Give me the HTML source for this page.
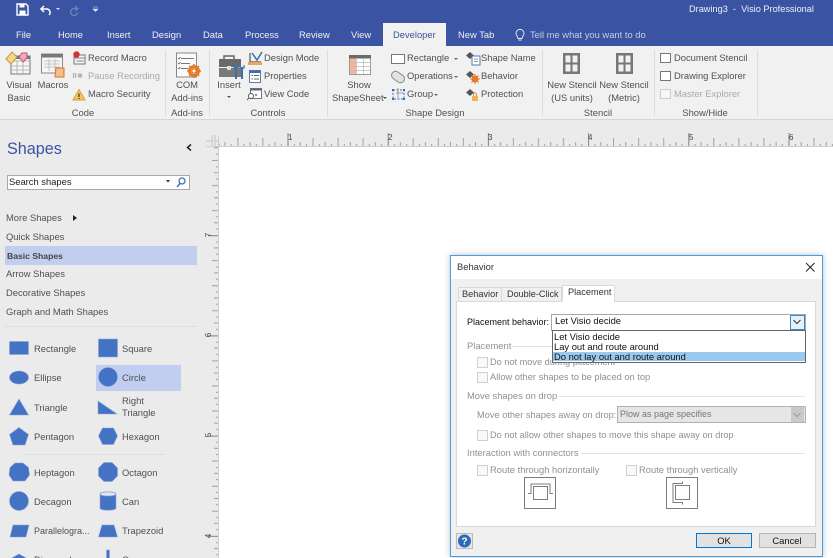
<!DOCTYPE html>
<html><head><meta charset="utf-8"><style>
html,body{margin:0;padding:0;width:833px;height:558px;overflow:hidden;background:#ebebeb}
#r{position:relative;width:833px;height:558px;overflow:hidden;font-family:"Liberation Sans",sans-serif;font-size:9.4px;color:#444;filter:blur(.35px)}
.t{position:absolute;line-height:12px;height:12px;white-space:nowrap}
.c{transform:translateX(-50%)}
.b{position:absolute}
.w{color:#eef1f8}
.g{color:#505050}
.s{color:#505050}
.d{color:#111}
.x{color:#909090}
.cb{position:absolute;width:9px;height:9px;border:1px solid #d0d0d0;background:#f9f9f9}
svg{position:absolute;overflow:visible}
</style></head><body><div id="r">

<!-- Title bar and tabs -->
<div class="b" style="left:0;top:0;width:833px;height:46px;background:#3a53a3"></div>
<svg style="left:0;top:0" width="120" height="20">
<path d="M17 4h9l2 2v9H17z" fill="none" stroke="#fff" stroke-width="1.4"/><rect x="19.500" y="4.500" width="5" height="3" fill="#fff"/><rect x="19.500" y="10.500" width="6" height="4" fill="#fff"/>
<path d="M44 6l-3 3 3 3M41 9h6a3.500 3.500 0 0 1 2 6" fill="none" stroke="#fff" stroke-width="1.500"/>
<path d="M56 8h4l-2 2z" fill="#dfe4f2"/>
<path d="M75 6l3 2.500-3 2.500M77 8.500h-3a3.500 3.500 0 1 0 3.500 4" fill="none" stroke="#6f83bd" stroke-width="1.300"/>
<path d="M93 7h5M93 9h5l-2.500 2.500z" fill="#dfe4f2" stroke="#dfe4f2" stroke-width=".6"/>
</svg>
<div class="t w" style="left:689px;top:3px;font-size:9.2px">Drawing3&nbsp; -&nbsp; Visio Professional</div>

<div class="t w" style="left:16px;top:29px">File</div>
<div class="t w" style="left:58px;top:29px">Home</div>
<div class="t w" style="left:107px;top:29px">Insert</div>
<div class="t w" style="left:152px;top:29px">Design</div>
<div class="t w" style="left:203px;top:29px">Data</div>
<div class="t w" style="left:245px;top:29px">Process</div>
<div class="t w" style="left:299px;top:29px">Review</div>
<div class="t w" style="left:351px;top:29px">View</div>
<div class="b" style="left:383px;top:23px;width:63px;height:24px;background:#f1f1f1"></div>
<div class="t" style="left:393px;top:29px;color:#3a53a3">Developer</div>
<div class="t w" style="left:458px;top:29px">New Tab</div>
<svg style="left:514px;top:28px" width="12" height="14"><path d="M3.500 8.500a4 4 0 1 1 5 0L8 10.500H4zM4.500 12h3" fill="none" stroke="#e8ecf6" stroke-width=".9"/></svg>
<div class="t" style="left:530px;top:29px;color:#c5cee6">Tell me what you want to do</div>

<!-- Ribbon -->
<div class="b" style="left:0;top:46px;width:833px;height:73px;background:#f1f1f1;border-bottom:1px solid #d6d6d6"></div>
<div class="b" style="left:165px;top:50px;width:1px;height:66px;background:#dcdcdc"></div>
<div class="b" style="left:209px;top:50px;width:1px;height:66px;background:#dcdcdc"></div>
<div class="b" style="left:327px;top:50px;width:1px;height:66px;background:#dcdcdc"></div>
<div class="b" style="left:542px;top:50px;width:1px;height:66px;background:#dcdcdc"></div>
<div class="b" style="left:654px;top:50px;width:1px;height:66px;background:#dcdcdc"></div>
<div class="b" style="left:757px;top:50px;width:1px;height:66px;background:#dcdcdc"></div>

<svg style="left:0;top:46px" width="760" height="60">
<!-- Visual Basic -->
<rect x="11" y="10" width="19" height="18" fill="#f6f6f6" stroke="#777"/><path d="M11 15h19M11 20h19M11 24h19M17 15v13M23 15v13" stroke="#a8a8a8" stroke-width=".8"/><rect x="11" y="10" width="19" height="3" fill="#777"/>
<path d="M12 6l5 5-6 7-5-5z" fill="#f3d88d" stroke="#c69a3a"/><path d="M22 7l5 0 0 5-4 4-4-5z" fill="#f2a8bb" stroke="#c5507a"/>
<!-- Macros -->
<rect x="41.500" y="8" width="21" height="19" fill="#f7f7f7" stroke="#888"/><rect x="41.500" y="8" width="21" height="3.500" fill="#777"/><path d="M44 15h16M44 18h16M44 21h16M49 13v12M55 13v12" stroke="#b5b5b5" stroke-width=".8"/>
<path d="M56 22h8v9h-9z" fill="#f2c08f" stroke="#d9762b"/>
<!-- Record etc -->
<rect x="74" y="9" width="11" height="9" fill="#f4f4f4" stroke="#777"/><path d="M74 12h11M76.500 15h7" stroke="#888"/><circle cx="76.500" cy="8.500" r="3.200" fill="#d0352a"/>
<path d="M73.500 27v5M75.500 27v5" stroke="#b5b5b5" stroke-width="1.300"/><circle cx="80" cy="29.500" r="2.300" fill="#b5b5b5"/>
<path d="M79 43.500l6 10.500H73z" fill="#f2c65e" stroke="#d4a440"/><path d="M79 47.500v3.500M79 52v1" stroke="#333" stroke-width="1.200"/>
<!-- COM -->
<rect x="176.500" y="7" width="20" height="24" fill="#fbfbfb" stroke="#888"/><path d="M181 12.500h13M181 17.500h9M181 22.500h7" stroke="#777" stroke-width=".9"/><path d="M178 12l1 1 1.500-2M178 17l1 1 1.500-2M178 22l1 1 1.500-2" fill="none" stroke="#5a5a5a" stroke-width=".7"/>
<circle cx="194" cy="25" r="4.500" fill="none" stroke="#e37b27" stroke-width="3"/><path d="M194 18v14M187 25h14M189 20l10 10M199 20l-10 10" stroke="#e37b27" stroke-width="1.500"/><circle cx="194" cy="25" r="1.500" fill="#fff"/>
<!-- Insert briefcase -->
<path d="M224 13v-3h10v3" fill="none" stroke="#666" stroke-width="1.500"/><rect x="219" y="13" width="22" height="8" fill="#696969"/><rect x="219" y="22" width="22" height="9" fill="#797979"/><rect x="227" y="20" width="4" height="4" fill="#ddd"/>
<path d="M236 21v12M242 21v12" stroke="#3a6fb0" stroke-width="2"/><path d="M234 19v3h4v-3M240 19v3h4v-3" fill="none" stroke="#3a6fb0" stroke-width="1.200"/>
<!-- Design mode -->
<path d="M250 7v9h11" fill="none" stroke="#555" stroke-width="1.200"/><path d="M252 7l5 7 5-8" fill="none" stroke="#3b6db5" stroke-width="1.500"/><rect x="248" y="16" width="14" height="3" fill="#e9a55a"/>
<!-- Properties -->
<rect x="249.500" y="24.500" width="11" height="12" fill="#fff" stroke="#5b7cb3"/><rect x="249.500" y="24.500" width="11" height="2.500" fill="#3b6db5"/><path d="M251.500 29.500h1.500M254 29.500h5M251.500 33h1.500M254 33h5" stroke="#666"/>
<!-- View code -->
<rect x="250.500" y="42.500" width="11" height="10" fill="#fff" stroke="#777"/><rect x="250.500" y="42.500" width="11" height="2" fill="#666"/><circle cx="251" cy="50" r="2.500" fill="#fff" stroke="#555"/><path d="M249 52l-2 2" stroke="#555"/><path d="M255 48l2 1-2 1" fill="none" stroke="#3b6db5" stroke-width=".7"/>
<!-- ShapeSheet -->
<rect x="349.500" y="9.500" width="21" height="19" fill="#fff" stroke="#999"/><rect x="349" y="9" width="22" height="3.500" fill="#6a6a6a"/><rect x="350" y="12.500" width="6" height="15.500" fill="#f5b79a"/><path d="M350 16.500h20M350 20.500h20M350 24.500h20M356.500 12v16M363.500 12v16" stroke="#bbb" stroke-width=".8"/>
<!-- Rectangle, operations, group -->
<rect x="391.500" y="8.500" width="13" height="9" fill="#fff" stroke="#777"/>
<g transform="rotate(35 398 31)"><rect x="391" y="27" width="14" height="8" rx="4" fill="#e2e2e2" stroke="#888"/></g>
<rect x="393" y="44" width="11" height="9" fill="none" stroke="#3b6db5" stroke-dasharray="2 1.500"/><path d="M398 42v10M396 47h8" stroke="#888" stroke-width=".8"/><path d="M392 43h2v2h-2zM403 43h2v2h-2zM392 52h2v2h-2zM403 52h2v2h-2z" fill="#3b6db5"/>
<path d="M454 12h4l-2 2zM454 30h4l-2 2zM434 48h4l-2 2z" fill="#666"/>
<!-- Shape name / behavior / protection -->
<path d="M470 6l4 3.500-4 3.500-4-3.500z" fill="#555"/><rect x="472" y="10" width="8" height="9" fill="#fff" stroke="#4f79b5"/><path d="M474 13h4M474 15.500h4" stroke="#777" stroke-width=".7"/>
<path d="M470 25l4 3.500-4 3.500-4-3.500z" fill="#555"/><circle cx="475" cy="33" r="2.500" fill="none" stroke="#e37b27" stroke-width="2"/><path d="M475 28v10M470 33h10M471.500 29.500l7 7M478.500 29.500l-7 7" stroke="#e37b27"/>
<path d="M470 43l4 3.500-4 3.500-4-3.500z" fill="#555"/><rect x="472" y="50" width="6" height="5" fill="#eab556"/><path d="M473.500 50v-1.500a1.500 1.500 0 0 1 3 0V50" fill="none" stroke="#c9922e"/>
<!-- stencils -->
<rect x="563" y="7" width="17" height="21" fill="#777"/><rect x="565.500" y="9.500" width="5" height="7" fill="#f1f1f1"/><rect x="572.500" y="9.500" width="5" height="7" fill="#f1f1f1"/><rect x="565.500" y="18.500" width="5" height="7" fill="#f1f1f1"/><rect x="572.500" y="18.500" width="5" height="7" fill="#f1f1f1"/>
<rect x="616" y="7" width="17" height="21" fill="#777"/><rect x="618.500" y="9.500" width="5" height="7" fill="#f1f1f1"/><rect x="625.500" y="9.500" width="5" height="7" fill="#f1f1f1"/><rect x="618.500" y="18.500" width="5" height="7" fill="#f1f1f1"/><rect x="625.500" y="18.500" width="5" height="7" fill="#f1f1f1"/>
<!-- check -->
<rect x="660.500" y="7.500" width="10" height="9" fill="#fff" stroke="#777"/><rect x="660.500" y="25.500" width="10" height="9" fill="#fff" stroke="#777"/><rect x="660.500" y="43.500" width="10" height="9" fill="#f6f6f6" stroke="#ccc"/>
</svg>

<div class="t g c" style="left:19px;top:79px">Visual</div>
<div class="t g c" style="left:19px;top:92px">Basic</div>
<div class="t g c" style="left:53px;top:79px">Macros</div>
<div class="t g" style="left:88px;top:52px">Record Macro</div>
<div class="t" style="left:88px;top:70px;color:#aaa">Pause Recording</div>
<div class="t g" style="left:88px;top:88px">Macro Security</div>
<div class="t s c" style="left:83px;top:107px">Code</div>
<div class="t g c" style="left:187px;top:79px">COM</div>
<div class="t g c" style="left:187px;top:92px">Add-ins</div>
<div class="t s c" style="left:187px;top:107px">Add-ins</div>
<div class="t g c" style="left:229px;top:79px">Insert</div>
<div class="b" style="left:227px;top:96px;width:0;height:0;border:2px solid transparent;border-top:2.500px solid #555"></div>
<div class="t g" style="left:264px;top:52px">Design Mode</div>
<div class="t g" style="left:264px;top:70px">Properties</div>
<div class="t g" style="left:264px;top:88px">View Code</div>
<div class="t s c" style="left:268px;top:107px">Controls</div>
<div class="t g c" style="left:359px;top:79px">Show</div>
<div class="t g" style="left:332px;top:92px">ShapeSheet</div>
<div class="b" style="left:383px;top:97px;width:0;height:0;border:2px solid transparent;border-top:2.500px solid #555"></div>
<div class="t g" style="left:407px;top:52px">Rectangle</div>
<div class="t g" style="left:407px;top:70px">Operations</div>
<div class="t g" style="left:407px;top:88px">Group</div>
<div class="t g" style="left:481px;top:52px">Shape Name</div>
<div class="t g" style="left:481px;top:70px">Behavior</div>
<div class="t g" style="left:481px;top:88px">Protection</div>
<div class="t s c" style="left:435px;top:107px">Shape Design</div>
<div class="t g c" style="left:572px;top:79px">New Stencil</div>
<div class="t g c" style="left:572px;top:92px">(US units)</div>
<div class="t g c" style="left:624px;top:79px">New Stencil</div>
<div class="t g c" style="left:624px;top:92px">(Metric)</div>
<div class="t s c" style="left:598px;top:107px">Stencil</div>
<div class="t g" style="left:674px;top:52px">Document Stencil</div>
<div class="t g" style="left:674px;top:70px">Drawing Explorer</div>
<div class="t" style="left:674px;top:88px;color:#aaa">Master Explorer</div>
<div class="t s c" style="left:705px;top:107px">Show/Hide</div>

<!-- Shapes pane -->
<div class="t" style="left:7px;top:143px;font-size:16.200px;color:#3a53a3">Shapes</div>
<svg style="left:186px;top:143px" width="8" height="9"><path d="M5 1.500L1.500 4.500 5 7.500" fill="none" stroke="#222" stroke-width="1.500"/></svg>
<div class="b" style="left:7px;top:175px;width:181px;height:13px;background:#fff;border:1px solid #a8a8a8"></div>
<div class="t d" style="left:9px;top:176px;color:#222">Search shapes</div>
<svg style="left:165px;top:177px" width="26" height="12"><path d="M1 3h4L3 5.500z" fill="#333"/><circle cx="17" cy="4" r="3" fill="none" stroke="#3b74b8" stroke-width="1.300"/><path d="M15 6.500l-3 3.500" stroke="#3b74b8" stroke-width="1.500"/></svg>
<div class="t g" style="left:6px;top:212px">More Shapes</div>
<svg style="left:72px;top:214px" width="6" height="8"><path d="M1 1l4 3-4 3z" fill="#222"/></svg>
<div class="t g" style="left:6px;top:231px">Quick Shapes</div>
<div class="b" style="left:5px;top:246px;width:192px;height:19px;background:#c1cef0"></div>
<div class="t" style="left:7px;top:250px;font-weight:bold;color:#444;font-size:8.600px">Basic Shapes</div>
<div class="t g" style="left:6px;top:268px">Arrow Shapes</div>
<div class="t g" style="left:6px;top:287px">Decorative Shapes</div>
<div class="t g" style="left:6px;top:306px">Graph and Math Shapes</div>
<div class="b" style="left:5px;top:326px;width:192px;height:1px;background:#dfdfdf"></div>
<div class="b" style="left:96px;top:365px;width:85px;height:26px;background:#c1cef0"></div>
<div class="b" style="left:25px;top:454px;width:140px;height:1px;background:#dfdfdf"></div>

<svg style="left:0;top:330px" width="200" height="228" fill="#4472c4" stroke="#8da3d6" stroke-width=".6">
<rect x="9.500" y="11.500" width="19" height="13"/>
<rect x="98.500" y="9" width="19" height="18"/>
<ellipse cx="19" cy="47.500" rx="9.500" ry="6.500"/>
<circle cx="108" cy="47" r="9.500"/>
<path d="M19 69l9.500 16h-19z"/>
<path d="M98 71l19 13H98z"/>
<path d="M19 97.500l9.500 7-3.500 10.500H13l-3.500-10.500z"/>
<path d="M102.500 98h11l4 8-4 8.500h-11l-4-8.500z"/>
<path d="M15 133h8l5.500 4.500 1 7.500-4.500 6H13l-4-6 1-7.500z"/>
<path d="M104 132.500h8l5.500 5.500v8l-5.500 5.500h-8l-5.500-5.500v-8z"/>
<circle cx="19" cy="171" r="9.500"/>
<path d="M100 164c0-3 16-3 16 0v14c0 3-16 3-16 0z"/><ellipse cx="108" cy="164" rx="8" ry="2" fill="#dfe6f5"/>
<path d="M13 195h16l-3 12H10z"/>
<path d="M102 195h12l3.500 12h-19z"/>
<path d="M19 224l9 5-9 5-9-5z"/>
<rect x="106.500" y="220" width="3" height="10"/>
</svg>

<div class="t g" style="left:34px;top:343px">Rectangle</div>
<div class="t g" style="left:122px;top:343px">Square</div>
<div class="t g" style="left:34px;top:372px">Ellipse</div>
<div class="t g" style="left:122px;top:372px">Circle</div>
<div class="t g" style="left:34px;top:402px">Triangle</div>
<div class="t g" style="left:122px;top:395px">Right</div>
<div class="t g" style="left:122px;top:407px">Triangle</div>
<div class="t g" style="left:34px;top:431px">Pentagon</div>
<div class="t g" style="left:122px;top:431px">Hexagon</div>
<div class="t g" style="left:34px;top:467px">Heptagon</div>
<div class="t g" style="left:122px;top:467px">Octagon</div>
<div class="t g" style="left:34px;top:496px">Decagon</div>
<div class="t g" style="left:122px;top:496px">Can</div>
<div class="t g" style="left:34px;top:525px;font-size:9px">Parallelogra...</div>
<div class="t g" style="left:122px;top:525px">Trapezoid</div>
<div class="t g" style="left:34px;top:554px">Diamond</div>
<div class="t g" style="left:122px;top:554px">Cross</div>

<!-- Rulers -->
<div class="b" style="left:219px;top:147px;width:614px;height:411px;background:#fff"></div>
<svg style="left:0;top:0" width="833" height="558">
<defs>
<pattern id="h" x="187.300" y="130" width="100.200" height="17" patternUnits="userSpaceOnUse">
<g stroke="#999" stroke-width=".9">
<path d="M.5 3v14" stroke="#777"/><path d="M25.500 8v9M50.600 8v9M75.600 8v9"/>
<path d="M6.800 14v3M12.700 12v5M19 14v3M31.800 14v3M37.700 12v5M44 14v3M56.900 14v3M62.800 12v5M69 14v3M81.900 14v3M87.800 12v5M94 14v3"/>
</g></pattern>
<pattern id="v" x="206" y="135" width="13" height="100.200" patternUnits="userSpaceOnUse">
<g stroke="#999" stroke-width=".9">
<path d="M2 .5h11" stroke="#777"/><path d="M6 25.500h7M6 50.600h7M6 75.600h7"/>
<path d="M10 6.800h3M8 12.700h5M10 19h3M10 31.800h3M8 37.700h5M10 44h3M10 56.900h3M8 62.800h5M10 69h3M10 81.900h3M8 87.800h5M10 94h3"/>
</g></pattern>
</defs>
<rect x="219" y="130" width="614" height="17" fill="url(#h)"/>
<rect x="206" y="147" width="13" height="411" fill="url(#v)"/>
<path d="M206 141h13M212 135v12M215 135v12" stroke="#d2d2d2" stroke-width="1.500"/>
<path d="M218.500 135v12M206 146.500h627" stroke="#d0d0d0"/>
<path d="M218.500 147v411" stroke="#d0d0d0"/>
</svg>
<div class="t" style="left:288px;top:132px;font-size:8px;color:#444">1</div>
<div class="t" style="left:388px;top:132px;font-size:8px;color:#444">2</div>
<div class="t" style="left:488px;top:132px;font-size:8px;color:#444">3</div>
<div class="t" style="left:588px;top:132px;font-size:8px;color:#444">4</div>
<div class="t" style="left:689px;top:132px;font-size:8px;color:#444">5</div>
<div class="t" style="left:789px;top:132px;font-size:8px;color:#444">6</div>
<div class="t" style="left:207px;top:229px;font-size:8px;color:#444;transform:rotate(-90deg)">7</div>
<div class="t" style="left:207px;top:329px;font-size:8px;color:#444;transform:rotate(-90deg)">6</div>
<div class="t" style="left:207px;top:429px;font-size:8px;color:#444;transform:rotate(-90deg)">5</div>
<div class="t" style="left:207px;top:530px;font-size:8px;color:#444;transform:rotate(-90deg)">4</div>

<!-- Dialog -->
<div class="b" style="left:450px;top:255px;width:371px;height:300px;background:#f0f0f0;border:1px solid #4a9be0;box-shadow:0 0 6px rgba(0,0,0,.25)"></div>
<div class="b" style="left:451px;top:256px;width:371px;height:23px;background:#fff"></div>
<div class="t d" style="left:457px;top:261px;color:#333">Behavior</div>
<svg style="left:805px;top:262px" width="11" height="11"><path d="M1 1l8.500 8.500M9.500 1L1 9.500" stroke="#222" stroke-width="1"/></svg>

<div class="b" style="left:456px;top:301px;width:358px;height:224px;background:#fff;border:1px solid #d9d9d9"></div>
<div class="b" style="left:458px;top:287px;width:44px;height:14px;background:#f0f0f0;border:1px solid #d9d9d9;border-bottom:0;box-sizing:border-box"></div>
<div class="b" style="left:502px;top:287px;width:60px;height:14px;background:#f0f0f0;border:1px solid #d9d9d9;border-bottom:0;border-left:0;box-sizing:border-box"></div>
<div class="b" style="left:562px;top:285px;width:53px;height:17px;background:#fff;border:1px solid #d9d9d9;border-bottom:0;box-sizing:border-box"></div>
<div class="t d" style="left:462px;top:288px;color:#333;font-size:9.200px">Behavior</div>
<div class="t d" style="left:507px;top:288px;color:#333;font-size:9.100px">Double-Click</div>
<div class="t d" style="left:568px;top:286px;color:#333;font-size:9.200px">Placement</div>

<div class="t d" style="left:467px;top:316px;font-size:9px">Placement behavior:</div>

<div class="t x" style="left:467px;top:340px">Placement</div>
<div class="b" style="left:511px;top:346px;width:41px;height:1px;background:#e0e4ea"></div>
<div class="cb" style="left:477px;top:357px"></div>
<div class="t x" style="left:490px;top:356px;font-size:9.200px">Do not move during placement</div>

<div class="b" style="left:551px;top:314px;width:253px;height:15px;background:#fff;border:1px solid #a6a6a6"></div>
<div class="t d" style="left:555px;top:315px">Let Visio decide</div>
<div class="b" style="left:790px;top:315px;width:13px;height:13px;background:#e5f1fb;border:1px solid #3f86c9"></div>
<svg style="left:792px;top:318px" width="11" height="8"><path d="M1.500 2l3.500 3.500L8.500 2" fill="none" stroke="#333" stroke-width="1"/></svg>

<div class="b" style="left:552px;top:330px;width:252px;height:31px;background:#fff;border:1px solid #666"></div>
<div class="t d" style="left:554px;top:331px">Let Visio decide</div>
<div class="t d" style="left:554px;top:341px">Lay out and route around</div>
<div class="b" style="left:553px;top:352px;width:252px;height:9px;background:#99c9ef"></div>
<div class="t d" style="left:554px;top:351px">Do not lay out and route around</div>

<div class="cb" style="left:477px;top:372px"></div>
<div class="t x" style="left:490px;top:371px;font-size:9.300px">Allow other shapes to be placed on top</div>
<div class="t x" style="left:467px;top:390px">Move shapes on drop</div>
<div class="b" style="left:559px;top:396px;width:246px;height:1px;background:#e0e4ea"></div>
<div class="t x" style="left:477px;top:409px;font-size:9.250px">Move other shapes away on drop:</div>
<div class="b" style="left:617px;top:406px;width:187px;height:15px;background:#e6e6e6;border:1px solid #a9b2bf"></div>
<div class="t" style="left:620px;top:408px;color:#777;font-size:9px">Plow as page specifies</div>
<div class="b" style="left:791px;top:407px;width:13px;height:15px;background:#c9c9c9"></div>
<svg style="left:792px;top:411px" width="11" height="8"><path d="M1.500 2l3.500 3.500L8.500 2" fill="none" stroke="#999" stroke-width="1"/></svg>
<div class="cb" style="left:477px;top:430px"></div>
<div class="t x" style="left:490px;top:429px;font-size:9.200px">Do not allow other shapes to move this shape away on drop</div>
<div class="t x" style="left:467px;top:447px">Interaction with connectors</div>
<div class="b" style="left:581px;top:453px;width:224px;height:1px;background:#e0e4ea"></div>
<div class="cb" style="left:477px;top:465px"></div>
<div class="t x" style="left:490px;top:464px">Route through horizontally</div>
<div class="cb" style="left:626px;top:465px"></div>
<div class="t x" style="left:639px;top:464px">Route through vertically</div>

<svg style="left:520px;top:474px" width="184" height="40" fill="none" stroke="#7d7d7d" stroke-width="1">
<rect x="4.500" y="3.500" width="31" height="31"/>
<rect x="13.500" y="12.500" width="14" height="13"/>
<path d="M8 19.500h3v-9.500h19v9.500h3"/>
<rect x="146.500" y="3.500" width="31" height="31"/>
<rect x="155.500" y="11.500" width="14" height="14"/>
<path d="M162.500 7.500v2h-9.500v19h9.500v2"/>
</svg>

<svg style="left:456px;top:533px" width="18" height="17"><rect x=".5" y=".5" width="16" height="15" fill="#e6e6e6" stroke="#bcbcbc"/><circle cx="8.500" cy="8" r="6.500" fill="#2d6cb3"/><text x="8.500" y="11.500" font-family="Liberation Sans" font-size="10" font-weight="bold" fill="#fff" text-anchor="middle">?</text></svg>
<div class="b" style="left:696px;top:533px;width:54px;height:13px;background:#e1e1e1;border:1.500px solid #0078d7"></div>
<div class="t d c" style="left:724px;top:535px">OK</div>
<div class="b" style="left:759px;top:533px;width:55px;height:13px;background:#e1e1e1;border:1.500px solid #b5b5b5"></div>
<div class="t d c" style="left:787px;top:535px">Cancel</div>

</div></body></html>
